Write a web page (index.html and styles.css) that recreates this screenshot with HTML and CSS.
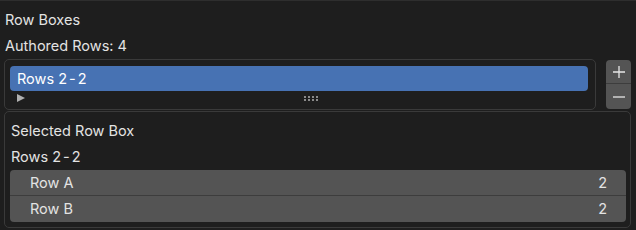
FILE: index.html
```html
<!DOCTYPE html>
<html lang="en">
<head>
    <meta charset="UTF-8">
    <title>Row Boxes</title>
    <link rel="stylesheet" href="styles.css">
</head>
<body>
    <div class="panel">
        <div class="label title">Row Boxes</div>
        <div class="label">Authored Rows: 4</div>

        <div class="list-row">
            <div class="list-box">
                <div class="list-item active">Rows 2<span class="dash">-</span>2</div>
                <div class="list-footer">
                    <span class="expander"></span>
                    <span class="grip">
                        <i></i><i></i><i></i><i></i>
                        <i></i><i></i><i></i><i></i>
                    </span>
                </div>
            </div>
            <div class="list-buttons">
                <button class="tool-btn">
                    <svg width="14" height="14" viewBox="0 0 14 14"><path d="M7 1v12M1 7h12" stroke="#e6e6e6" stroke-width="1.3"/></svg>
                </button>
                <button class="tool-btn">
                    <svg width="14" height="14" viewBox="0 0 14 14"><path d="M1 7h12" stroke="#e6e6e6" stroke-width="1.3"/></svg>
                </button>
            </div>
        </div>

        <div class="sub-box">
            <div class="label">Selected Row Box</div>
            <div class="label">Rows 2<span class="dash">-</span>2</div>
            <div class="field-stack">
                <div class="field"><span>Row A</span><span>2</span></div>
                <div class="field"><span>Row B</span><span>2</span></div>
            </div>
        </div>
    </div>
</body>
</html>
```

FILE: styles.css
```css
body {
    margin: 0;
    background: #1e1e1e;
    font-family: Inter, "Noto Sans", sans-serif;
    font-size: 14.5px;
    color: #e3e3e3;
}

.panel {
    border-top: 1px solid #2e2e2e;
    padding: 6px 4px 2px 4px;
    height: 221px;
}

.label {
    height: 25px;
    line-height: 25px;
    padding-left: 1px;
}

.title {
    height: 26px;
}

.dash {
    margin: 0 2px;
}

.list-row {
    display: flex;
    align-items: flex-start;
    gap: 10px;
    margin-top: 1px;
}

.list-box {
    width: 592px;
    height: 51px;
    border: 1px solid #3a3a3a;
    border-radius: 5px;
    padding: 6px 7px 0 5px;
    box-sizing: border-box;
}

.list-item {
    height: 25px;
    line-height: 25px;
    padding-left: 7px;
    border-radius: 4px;
}

.list-item.active {
    background: #4772b3;
    color: #ffffff;
}

.list-footer {
    display: flex;
    align-items: center;
    height: 14px;
}

.expander {
    width: 0;
    height: 0;
    margin-left: 7px;
    border-left: 8px solid #b0b0b0;
    border-top: 4px solid transparent;
    border-bottom: 4px solid transparent;
}

.grip {
    display: grid;
    grid-template-columns: repeat(4, 2px);
    gap: 1px 2px;
    margin-left: 279px;
}

.grip i {
    width: 2px;
    height: 2px;
    background: #8a8a8a;
}

.list-buttons {
    display: flex;
    flex-direction: column;
    width: 25px;
    margin-top: 1px;
}

.tool-btn {
    width: 25px;
    height: 24px;
    border: none;
    padding: 0;
    background: #545454;
    display: flex;
    align-items: center;
    justify-content: center;
}

.tool-btn:first-child {
    border-radius: 4px 4px 0 0;
    border-bottom: 1px solid #3d3d3d;
}

.tool-btn:last-child {
    border-radius: 0 0 4px 4px;
    height: 25px;
}

.sub-box {
    margin-top: 1px;
    width: 627px;
    height: 117px;
    box-sizing: border-box;
    border: 1px solid #3a3a3a;
    border-radius: 5px;
    padding: 6px 5px 0 5px;
}

.sub-box .label {
    padding-left: 1px;
    height: 26px;
    line-height: 26px;
}

.field-stack {
    border-radius: 4px;
    overflow: hidden;
    width: 616px;
}

.field {
    display: flex;
    justify-content: space-between;
    height: 25px;
    line-height: 25px;
    padding: 0 19px 0 20px;
    background: #545454;
}

.field + .field {
    border-top: 1px solid #3d3d3d;
    height: 26px;
}
```
